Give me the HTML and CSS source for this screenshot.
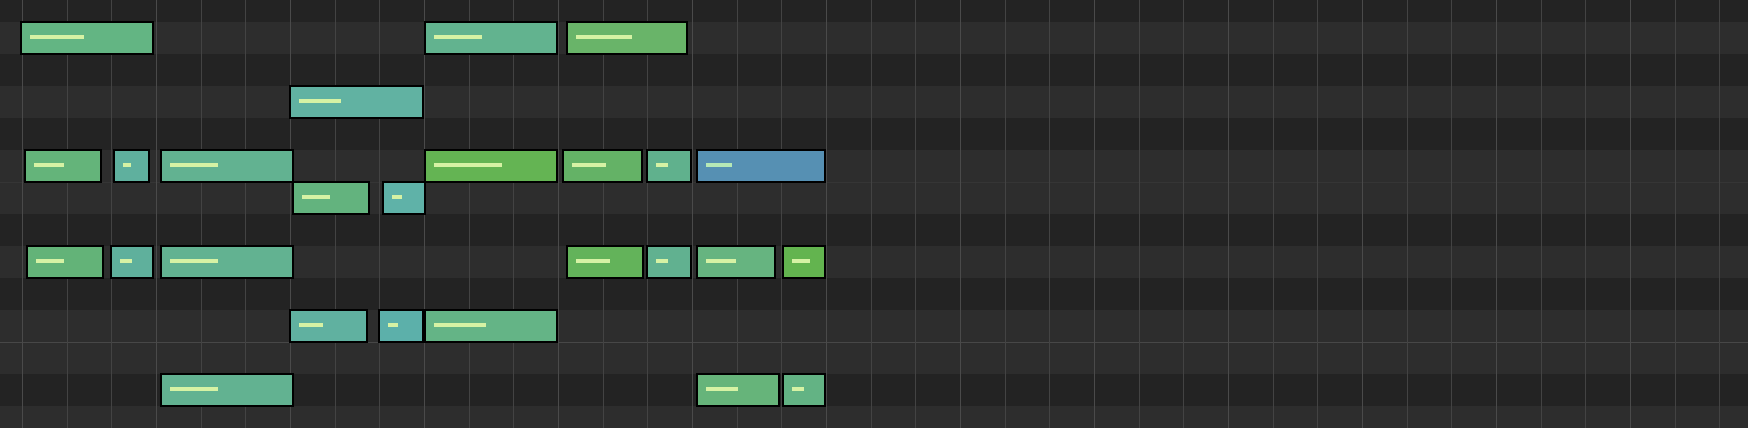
FILE: index.html
```html
<!DOCTYPE html>
<html>
<head>
<meta charset="utf-8">
<link rel="stylesheet" href="styles.css">
</head>
<body>
<div class="roll">
  <div class="keys">
    <div class="row black"></div>
    <div class="row white"></div>
    <div class="row black"></div>
    <div class="row white"></div>
    <div class="row black"></div>
    <div class="row white"></div>
    <div class="row white split-soft"></div>
    <div class="row black"></div>
    <div class="row white"></div>
    <div class="row black"></div>
    <div class="row white"></div>
    <div class="row white split-octave"></div>
    <div class="row black"></div>
    <div class="row white"></div>
  </div>
  <div class="beats"></div>
  <div class="notes">
    <div class="note" style="left:20px;top:21px;width:134px;background:#63b583"><i style="width:54px"></i></div>
    <div class="note" style="left:424px;top:21px;width:134px;background:#62b38f"><i style="width:48px"></i></div>
    <div class="note" style="left:566px;top:21px;width:122px;background:#69b469"><i style="width:56px"></i></div>

    <div class="note" style="left:289px;top:85px;width:135px;background:#61b2a2"><i style="width:42px"></i></div>

    <div class="note" style="left:24px;top:149px;width:78px;background:#64b47a"><i style="width:30px"></i></div>
    <div class="note" style="left:113px;top:149px;width:37px;background:#5fb09e"><i style="width:8px"></i></div>
    <div class="note" style="left:160px;top:149px;width:134px;background:#62b291"><i style="width:48px"></i></div>
    <div class="note" style="left:424px;top:149px;width:134px;background:#64b453"><i style="width:68px"></i></div>
    <div class="note" style="left:562px;top:149px;width:81px;background:#64b266"><i style="width:34px"></i></div>
    <div class="note" style="left:646px;top:149px;width:46px;background:#60b18d"><i style="width:12px"></i></div>
    <div class="note blue" style="left:696px;top:149px;width:130px;background:#5690b3"><i style="width:26px"></i></div>

    <div class="note" style="left:292px;top:181px;width:78px;background:#63b37e"><i style="width:28px"></i></div>
    <div class="note" style="left:382px;top:181px;width:44px;background:#5fb2a8"><i style="width:10px"></i></div>

    <div class="note" style="left:26px;top:245px;width:78px;background:#63b378"><i style="width:28px"></i></div>
    <div class="note" style="left:110px;top:245px;width:44px;background:#5fb09c"><i style="width:12px"></i></div>
    <div class="note" style="left:160px;top:245px;width:134px;background:#62b291"><i style="width:48px"></i></div>
    <div class="note" style="left:566px;top:245px;width:78px;background:#63b35a"><i style="width:34px"></i></div>
    <div class="note" style="left:646px;top:245px;width:46px;background:#61b190"><i style="width:12px"></i></div>
    <div class="note" style="left:696px;top:245px;width:80px;background:#66b480"><i style="width:30px"></i></div>
    <div class="note" style="left:782px;top:245px;width:44px;background:#63b44f"><i style="width:18px"></i></div>

    <div class="note" style="left:289px;top:309px;width:79px;background:#60b1a0"><i style="width:24px"></i></div>
    <div class="note" style="left:378px;top:309px;width:46px;background:#5cb0aa"><i style="width:10px"></i></div>
    <div class="note" style="left:424px;top:309px;width:134px;background:#64b486"><i style="width:52px"></i></div>

    <div class="note" style="left:160px;top:373px;width:134px;background:#62b291"><i style="width:48px"></i></div>
    <div class="note" style="left:696px;top:373px;width:84px;background:#66b47a"><i style="width:32px"></i></div>
    <div class="note" style="left:782px;top:373px;width:44px;background:#63b384"><i style="width:12px"></i></div>
  </div>
</div>
</body>
</html>
```
FILE: styles.css
```css
html, body {
  margin: 0;
  padding: 0;
  background: #232323;
  font-family: "Liberation Sans", sans-serif;
}

.roll {
  position: relative;
  width: 1748px;
  height: 428px;
  overflow: hidden;
}

.keys {
  display: flex;
  flex-direction: column;
  margin-top: -10px;
}

.row {
  height: 32px;
  flex: none;
}

.row.black {
  background: #232323;
}

.row.white {
  background: #2d2d2d;
}

.row.split-soft {
  box-shadow: inset 0 1px 0 #353535;
}

.row.split-octave {
  box-shadow: inset 0 1px 0 #474747;
}

.beats {
  position: absolute;
  inset: 0;
  background-image:
    repeating-linear-gradient(to right,
      transparent 0, transparent 22px,
      #4a4a4a 22px, #4a4a4a 23px,
      transparent 23px, transparent 134px),
    repeating-linear-gradient(to right,
      transparent 0, transparent 66.67px,
      #434343 66.67px, #434343 67.67px,
      transparent 67.67px, transparent 111.33px,
      #434343 111.33px, #434343 112.33px,
      transparent 112.33px, transparent 134px);
}

.notes {
  position: absolute;
  inset: 0;
}

.note {
  position: absolute;
  height: 34px;
  box-sizing: border-box;
  border: 2px solid #000000;
  padding: 12px 0 0 8px;
}

.note i {
  display: block;
  height: 4px;
  background: #d6f2a4;
}

.note.blue i {
  background: #b6e8b6;
}
```
